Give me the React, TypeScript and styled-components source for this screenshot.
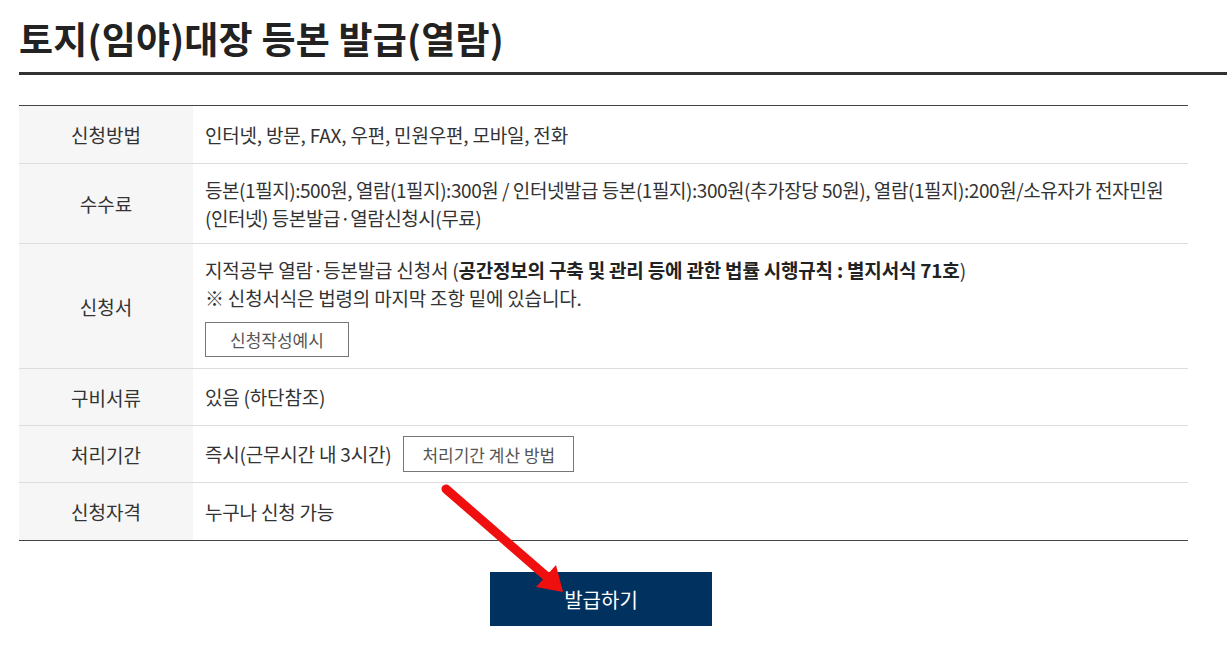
import styled, { createGlobalStyle } from 'styled-components'

const GlobalStyle = createGlobalStyle`
  html, body {
    margin: 0;
    padding: 0;
    background: #ffffff;
  }
  body {
    font-family: 'Noto Sans CJK KR', 'Noto Sans', sans-serif;
    color: #333333;
  }
`

const Page = styled.div`
  position: relative;
  width: 1227px;
  height: 650px;
  overflow: hidden;
  padding-left: 19px;
  box-sizing: border-box;
`

const Title = styled.h2`
  margin: 0;
  padding-top: 14px;
  font-size: 37px;
  line-height: 48px;
  font-weight: 700;
  letter-spacing: 0.2px;
  color: #222222;
`

const HeavyRule = styled.div`
  margin-top: 10px;
  height: 3px;
  background: #333333;
`

const Table = styled.div`
  margin-top: 30px;
  width: 1169px;
  border-top: 1px solid #444444;
  border-bottom: 1px solid #444444;
`

const Row = styled.div`
  display: grid;
  grid-template-columns: 174px 1fr;
  min-height: 56px;
  border-bottom: 1px solid #dddddd;

  &:first-child {
    min-height: 57px;
  }

  &:last-child {
    min-height: 57px;
    border-bottom: none;
  }
`

const Label = styled.div`
  display: flex;
  align-items: center;
  justify-content: center;
  background: #f6f6f6;
  font-size: 19px;
  color: #333333;
`

const Cell = styled.div<{ $compact?: boolean }>`
  display: flex;
  flex-direction: column;
  justify-content: center;
  align-items: flex-start;
  padding: ${({ $compact }) => ($compact ? '10px' : '11.5px')} 12px;
  font-size: 19px;
  line-height: 28px;
  letter-spacing: -0.2px;
  color: #333333;
`

const Line = styled.span<{ $tight?: boolean }>`
  white-space: nowrap;
  letter-spacing: ${({ $tight }) => ($tight ? '-0.45px' : 'inherit')};
`

const Inline = styled.div`
  display: flex;
  align-items: center;
`

const Strong = styled.b`
  font-weight: 700;
  color: #222222;
`

const SmallButton = styled.button<{ $inline?: boolean }>`
  margin-top: ${({ $inline }) => ($inline ? '0' : '10px')};
  margin-left: ${({ $inline }) => ($inline ? '12px' : '0')};
  height: ${({ $inline }) => ($inline ? '36px' : '35px')};
  padding: 0 ${({ $inline }) => ($inline ? '18px' : '24px')};
  background: #ffffff;
  border: 1px solid #777777;
  font-family: 'Noto Sans CJK KR', 'Noto Sans', sans-serif;
  font-size: 17px;
  color: #555555;
  cursor: pointer;
`

const Actions = styled.div`
  width: 1169px;
  display: flex;
  justify-content: center;
  margin-top: 31px;
`

const IssueButton = styled.button`
  width: 222px;
  height: 54px;
  margin-left: -5px;
  border: none;
  background: #01325f;
  color: #ffffff;
  font-family: 'Noto Sans CJK KR', 'Noto Sans', sans-serif;
  font-size: 20px;
  cursor: pointer;
`

const ArrowOverlay = styled.svg`
  position: absolute;
  left: 0;
  top: 0;
  pointer-events: none;
`

const rows = [
  { label: '신청방법', content: <>인터넷, 방문, FAX, 우편, 민원우편, 모바일, 전화</> },
  {
    label: '수수료',
    content: (
      <>
        <Line $tight>
          등본(1필지):500원, 열람(1필지):300원 / 인터넷발급 등본(1필지):300원(추가장당 50원), 열람(1필지):200원/소유자가 전자민원
        </Line>
        <Line $tight>(인터넷) 등본발급·열람신청시(무료)</Line>
      </>
    ),
  },
  {
    label: '신청서',
    content: (
      <>
        <Line>
          지적공부 열람·등본발급 신청서 (<Strong>공간정보의 구축 및 관리 등에 관한 법률 시행규칙 : 별지서식 71호</Strong>)
        </Line>
        <Line>※ 신청서식은 법령의 마지막 조항 밑에 있습니다.</Line>
        <SmallButton>신청작성예시</SmallButton>
      </>
    ),
  },
  { label: '구비서류', content: <>있음 (하단참조)</> },
  {
    label: '처리기간',
    compact: true,
    content: (
      <Inline>
        즉시(근무시간 내 3시간)
        <SmallButton $inline>처리기간 계산 방법</SmallButton>
      </Inline>
    ),
  },
  { label: '신청자격', content: <>누구나 신청 가능</> },
]

export default function App() {
  return (
    <>
      <GlobalStyle />
      <Page>
        <Title>토지(임야)대장 등본 발급(열람)</Title>
        <HeavyRule />
        <Table>
          {rows.map((row) => (
            <Row key={row.label}>
              <Label>{row.label}</Label>
              <Cell $compact={row.compact}>{row.content}</Cell>
            </Row>
          ))}
        </Table>
        <Actions>
          <IssueButton>발급하기</IssueButton>
        </Actions>

        {/* red pointer arrow drawn over the button */}
        <ArrowOverlay width="1227" height="650" viewBox="0 0 1227 650">
          <line x1="446" y1="489" x2="546" y2="576" stroke="#f00f0f" strokeWidth="9" strokeLinecap="round" />
          <polygon points="556,565 536,587 563,592" fill="#f00f0f" />
        </ArrowOverlay>
      </Page>
    </>
  )
}
